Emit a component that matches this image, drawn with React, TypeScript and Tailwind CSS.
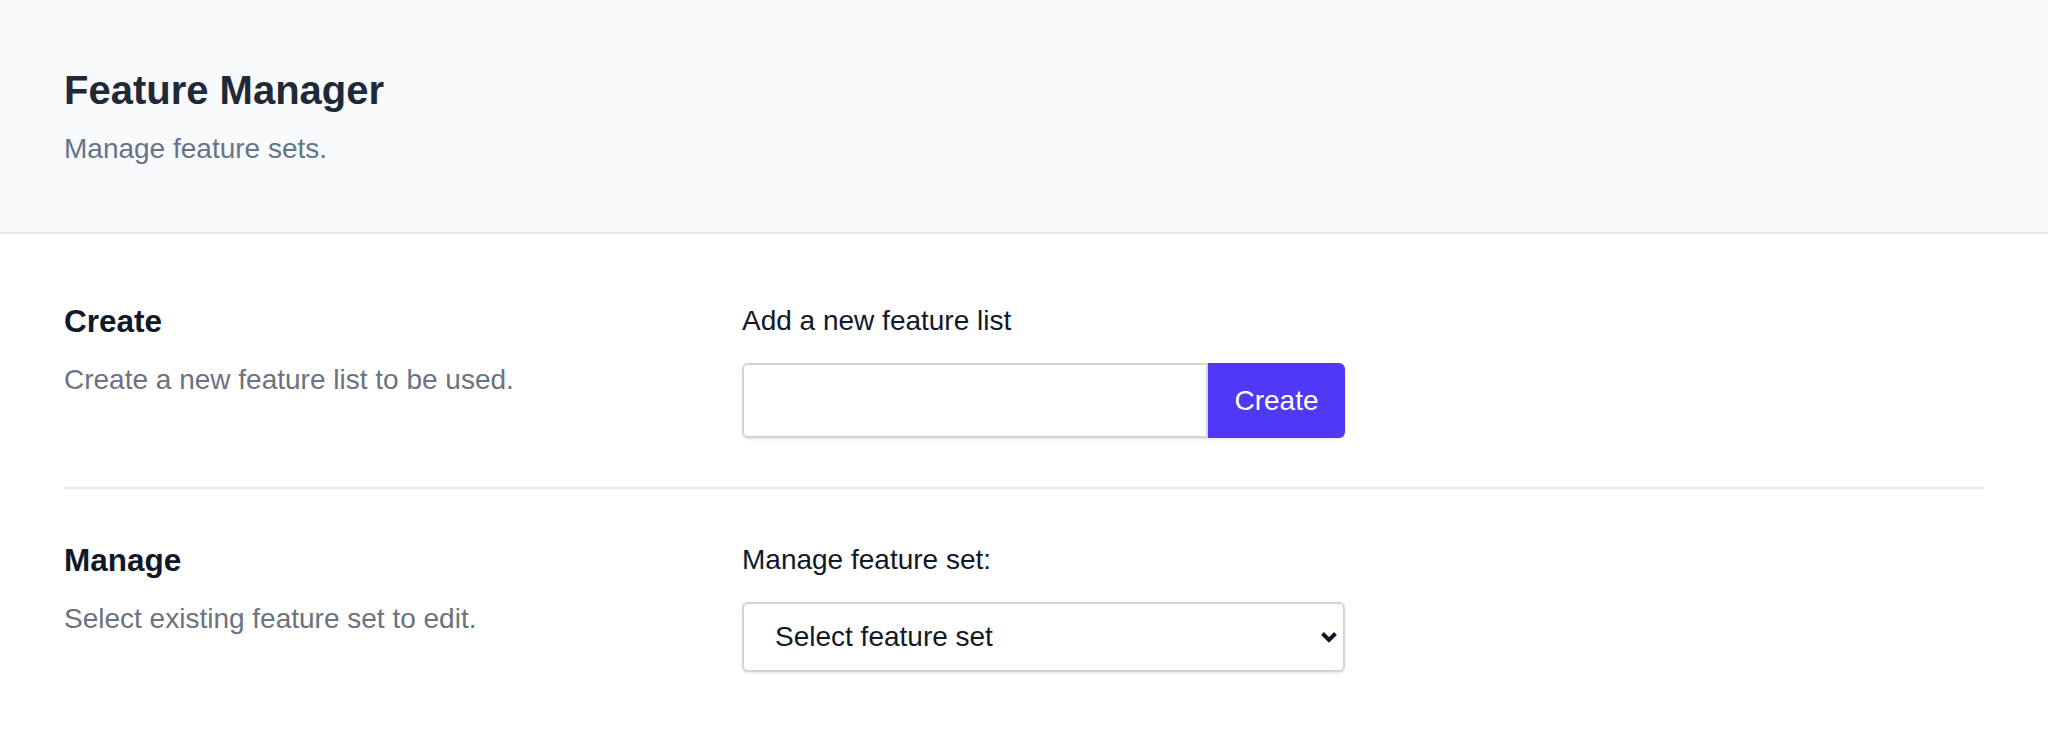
import React from "react";

const Chevron = () => (
  <svg
    width="18"
    height="12"
    viewBox="0 0 18 12"
    className="pointer-events-none absolute right-[7px] top-1/2 -translate-y-1/2"
  >
    <path d="M2.5 2.5 L9 9 L15.5 2.5" fill="none" stroke="#111827" strokeWidth="4" />
  </svg>
);

export default function App() {
  return (
    <div className="min-h-[736px] bg-white font-['Liberation_Sans',Arial,sans-serif]">
      {/* Cabecera */}
      <header className="border-b-2 border-[#e5e7eb] bg-[#f9fafb] px-[64px] pt-[66px] pb-[63px]">
        <h1 className="text-[40px] leading-[48px] font-bold text-[#1f2937]">Feature Manager</h1>
        <p className="mt-[15px] text-[28px] leading-[40px] text-[#64748b]">Manage feature sets.</p>
      </header>

      <main className="px-[64px] pt-[67px]">
        {/* Crear */}
        <section className="grid grid-cols-[678px_1fr] border-b-2 border-[#e5e7eb] pb-[49px]">
          <div>
            <h2 className="text-[31.5px] leading-[40px] font-bold text-[#111827]">Create</h2>
            <p className="mt-[19px] text-[28px] leading-[40px] text-[#6b7280]">
              Create a new feature list to be used.
            </p>
          </div>
          <div>
            <label className="block text-[28px] leading-[40px] text-[#111827]">Add a new feature list</label>
            <div className="mt-[22px] flex h-[75px] w-[603px] rounded-[6px] shadow-sm">
              <input
                type="text"
                className="min-w-0 flex-1 rounded-l-[6px] border-2 border-[#d1d5db] bg-white px-4 text-[28px] outline-none"
              />
              <button className="w-[137px] shrink-0 rounded-r-[6px] bg-[#4f39f6] text-[28px] text-white">Create</button>
            </div>
          </div>
        </section>

        {/* Gestionar */}
        <section className="grid grid-cols-[678px_1fr] pt-[51px]">
          <div>
            <h2 className="text-[31.5px] leading-[40px] font-bold text-[#111827]">Manage</h2>
            <p className="mt-[19px] text-[28px] leading-[40px] text-[#6b7280]">
              Select existing feature set to edit.
            </p>
          </div>
          <div>
            <label className="block text-[28px] leading-[40px] text-[#111827]">Manage feature set:</label>
            <div className="relative mt-[22px] w-[603px]">
              <select className="h-[70px] w-full appearance-none rounded-[6px] border-2 border-[#d1d5db] bg-white pl-[31px] text-[28px] text-[#111827] shadow-sm outline-none">
                <option>Select feature set</option>
              </select>
              <Chevron />
            </div>
          </div>
        </section>
      </main>
    </div>
  );
}
